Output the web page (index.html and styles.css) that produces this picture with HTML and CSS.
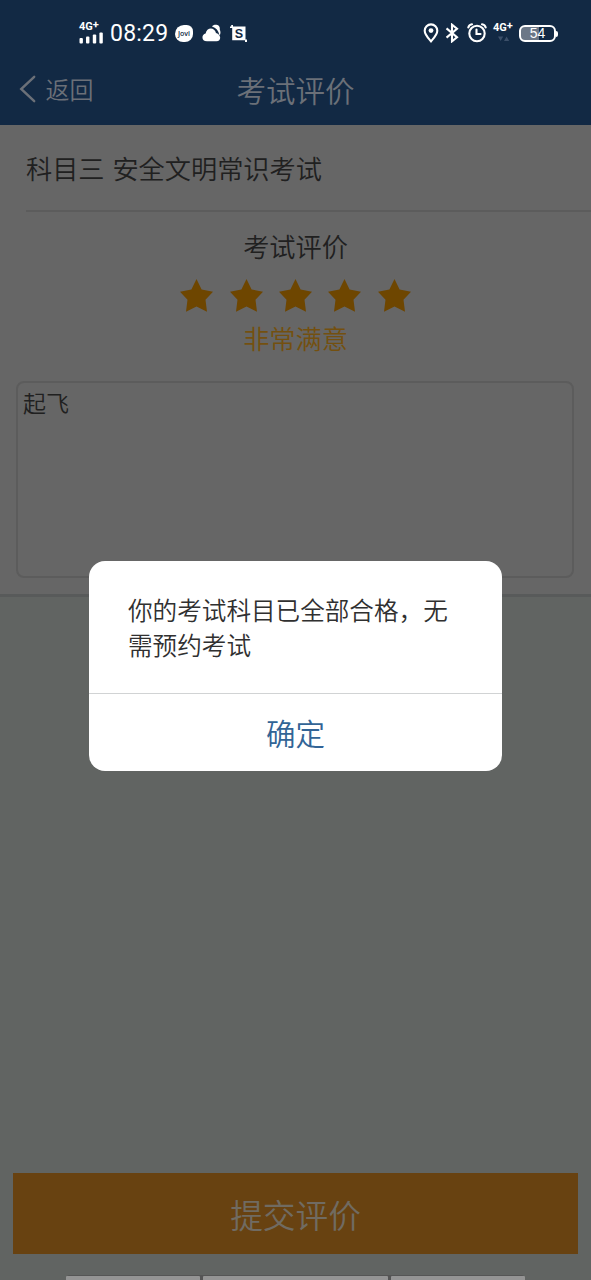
FILE: index.html
```html
<!DOCTYPE html>
<html lang="zh-CN">
<head>
<meta charset="utf-8">
<title>考试评价</title>
<link rel="stylesheet" href="styles.css">
</head>
<body>
<div class="screen">
  <header class="header">
    <div class="status">
      <div class="status-left">
        <div class="signal">
          <span class="net">4G<sup>+</sup></span>
          <svg width="25" height="12" viewBox="0 0 25 12" fill="#fff"><rect x="0.500" y="6" width="3.400" height="5.500" rx="1"/><rect x="7" y="4.500" width="3.400" height="7" rx="1"/><rect x="13.800" y="2.500" width="3.400" height="9" rx="1"/><rect x="20.400" y="0.500" width="3.400" height="11" rx="1"/></svg>
        </div>
        <span class="clock">08:29</span>
        <span class="jovi">Jovi</span>
        <svg class="cloud" width="20" height="20" viewBox="0 0 20 20"><path d="M10 3.500C11.500 .8 18.500 .8 17.800 6.500Q19.300 10 17.500 12.500Q16 5 10 3.500Z" fill="#fff"/><path d="M5 18.300C-.8 18.300-.8 11.500 3.600 10.600C4.500 4 12.500 3.500 14 10C19.500 11.500 19.500 18.300 14.500 18.300Z" fill="#fff"/></svg>
        <svg class="shot" width="18" height="19" viewBox="0 0 18 19"><path d="M1.200 1H3V2.500H15.500V15.500H17V18H15V16.200H2.200V4H0V2.500H1.200Z" fill="#fff"/><text x="8.900" y="14.200" text-anchor="middle" class="shot-s">S</text></svg>
      </div>
      <div class="status-right">
        <svg width="16" height="20" viewBox="0 0 16 20" fill="none" stroke="#fff" stroke-width="2.100"><path d="M8 18.300C5 14.800 1.700 11.500 1.700 7.700A6.300 6.300 0 0 1 14.300 7.700C14.300 11.500 11 14.800 8 18.300Z"/><circle cx="8" cy="7.600" r="2.400" fill="#fff" stroke="none"/></svg>
        <svg width="14" height="20" viewBox="0 0 14 20" fill="none" stroke="#fff" stroke-width="2.100"><path d="M1.500 5.400L12 14.200L7 18.300V1.700L12 5.800L1.500 14.600"/></svg>
        <svg class="alarm" width="20" height="20" viewBox="0 0 20 20" fill="none" stroke="#fff" stroke-width="2.100" stroke-linecap="round"><circle cx="10" cy="10.500" r="7.700"/><path d="M9.500 6.500V11H13.500M1.300 4.400Q2 1.800 5 1.300M18.700 4.400Q18 1.800 15 1.300"/></svg>
        <div class="net-small"><span class="net">4G<sup>+</sup></span><svg width="12" height="6" viewBox="0 0 12 6" fill="#3c4f69"><path d="M0 .5H5.200L2.600 5ZM6 5H11.200L8.600 .5Z"/></svg></div>
        <div class="battery"><span class="level">54</span></div>
      </div>
    </div>
    <nav class="nav">
      <div class="back"><svg width="18" height="28" viewBox="0 0 18 28" fill="none" stroke="#6b7078" stroke-width="2.400" stroke-linecap="round"><path d="M15.200 1.800L2.200 14L15.200 26.200"/></svg><span>返回</span></div>
      <h1 class="title">考试评价</h1>
    </nav>
  </header>
  <section class="form">
    <div class="subject">科目三 安全文明常识考试</div>
    <div class="rating">
      <div class="rating-title">考试评价</div>
      <div class="stars">
        <svg viewBox="0 0 33 33"><path d="M16.500 0L21.600 10.500L33 12.700L25.500 20.800L27 32.700L16.500 27.500L6 32.700L7.500 20.800L0 12.700L11.400 10.500Z"/></svg>
        <svg viewBox="0 0 33 33"><path d="M16.500 0L21.600 10.500L33 12.700L25.500 20.800L27 32.700L16.500 27.500L6 32.700L7.500 20.800L0 12.700L11.400 10.500Z"/></svg>
        <svg viewBox="0 0 33 33"><path d="M16.500 0L21.600 10.500L33 12.700L25.500 20.800L27 32.700L16.500 27.500L6 32.700L7.500 20.800L0 12.700L11.400 10.500Z"/></svg>
        <svg viewBox="0 0 33 33"><path d="M16.500 0L21.600 10.500L33 12.700L25.500 20.800L27 32.700L16.500 27.500L6 32.700L7.500 20.800L0 12.700L11.400 10.500Z"/></svg>
        <svg viewBox="0 0 33 33"><path d="M16.500 0L21.600 10.500L33 12.700L25.500 20.800L27 32.700L16.500 27.500L6 32.700L7.500 20.800L0 12.700L11.400 10.500Z"/></svg>
      </div>
      <div class="rating-label">非常满意</div>
    </div>
    <div class="comment">起飞</div>
  </section>
  <footer class="footer">
    <div class="submit">提交评价</div>
    <div class="gestures"><i></i><i></i><i></i></div>
  </footer>
  <div class="dialog">
    <p class="message">你的考试科目已全部合格，无需预约考试</p>
    <div class="confirm">确定</div>
  </div>
</div>
</body>
</html>
```
FILE: styles.css
```css
* { box-sizing: border-box; }
body { margin: 0; font-family: "Noto Sans CJK SC DemiLight", "Noto Sans CJK SC", sans-serif; font-weight: 350; }
svg { display: block; flex: none; }
.screen { position: relative; width: 591px; height: 1280px; overflow: hidden; display: flex; flex-direction: column; background: #616462; }
.header { height: 125px; background: #122944; flex: none; }
.status { height: 60px; padding: 0 35px 0 79px; display: flex; justify-content: space-between; color: #fff; font-family: Roboto, sans-serif; }
.status-left, .status-right { display: flex; align-items: center; height: 66px; }
.signal { width: 25px; margin-right: 6px; padding-bottom: 2px; }
.signal svg { margin-top: -1px; }
.net { display: block; font: 700 11px/12px Roboto, sans-serif; white-space: nowrap; }
.net sup { font-size: 11px; line-height: 0; vertical-align: 2px; }
.clock { width: 59px; font: 400 23px/26px Roboto, sans-serif; letter-spacing: .2px; padding-top: 2px; }
.jovi { margin-left: 6px; width: 18px; height: 17px; border-radius: 10px 7px 9px 9px; background: #fff; color: #122944; font: 600 7px/17px "Open Sans", sans-serif; text-align: center; }
.cloud { margin-left: 9px; margin-bottom: 1px; }
.shot { margin-left: 8px; }
.shot-s { font: 700 12.500px "Liberation Sans", sans-serif; fill: #122944; }
.status-right svg + svg { margin-left: 6px; }
.status-right .alarm { margin-left: 8px; }
.net-small { margin-left: 6px; width: 20px; padding-bottom: 3px; }
.net-small svg { margin: 2px 0 0 5px; }
.battery { position: relative; margin-left: 6px; width: 37px; height: 17px; border: 2px solid #fff; border-radius: 6px; background: linear-gradient(90deg, #6b7787 54%, transparent 54%); text-align: center; }
.battery::after { content: ""; position: absolute; right: -4px; top: 4px; width: 2px; height: 6px; border-radius: 0 2px 2px 0; background: #fff; }
.level { display: block; font: 400 14px/13px "Liberation Sans", sans-serif; }
.nav { height: 60px; display: grid; grid-template-columns: 1fr auto 1fr; align-items: center; color: #6b7078; }
.back { display: flex; align-items: center; padding-left: 19px; gap: 8.500px; font-size: 24px; line-height: 30px; }
.back svg, .back span { margin-bottom: 2px; }
.title { margin: 0 0 2px; font-size: 29.500px; line-height: 40px; font-weight: 400; }
.form { height: 472px; border-bottom: 3px solid #585a5a; background: #666; color: #202020; flex: none; }
.subject { height: 87px; margin-left: 26px; border-bottom: 2px solid #5c5c5c; font-size: 26.200px; line-height: 86px; word-spacing: 2px; }
.rating { display: flex; flex-direction: column; align-items: center; font-size: 26.200px; line-height: 36px; padding-top: 16px; }
.stars { display: flex; gap: 16.300px; margin: 15px 0 8px; }
.stars svg { width: 33px; height: 33px; fill: #6e4600; }
.rating-label { color: #74500f; }
.comment { margin: 25px 17px 0 16px; height: 197px; border: 2px solid #5c5c5c; border-radius: 8px; padding: 2px 5px; font-size: 23px; line-height: 34px; }
.footer { margin-top: auto; height: 107px; display: flex; flex-direction: column; align-items: center; }
.submit { width: 565px; height: 81px; background: #684211; color: #706b62; font-size: 32.700px; line-height: 81px; text-align: center; }
.gestures { margin-top: 21px; display: grid; grid-template-columns: 134px 185px 134px; gap: 3px; height: 5px; padding-top: 1px; background: #555; border-radius: 4px 4px 0 0; }
.gestures i { background: #949494; border-radius: 1px 1px 0 0; }
.dialog { position: absolute; left: 89px; top: 561px; width: 413px; height: 210px; border-radius: 16px; background: #fff; }
.message { margin: 0; height: 133px; padding: 31px 39px 0; border-bottom: 1px solid #d1d3d4; color: #303030; font-size: 24.600px; line-height: 35px; }
.confirm { text-align: center; color: #326496; font-size: 29.500px; line-height: 77px; }
```
